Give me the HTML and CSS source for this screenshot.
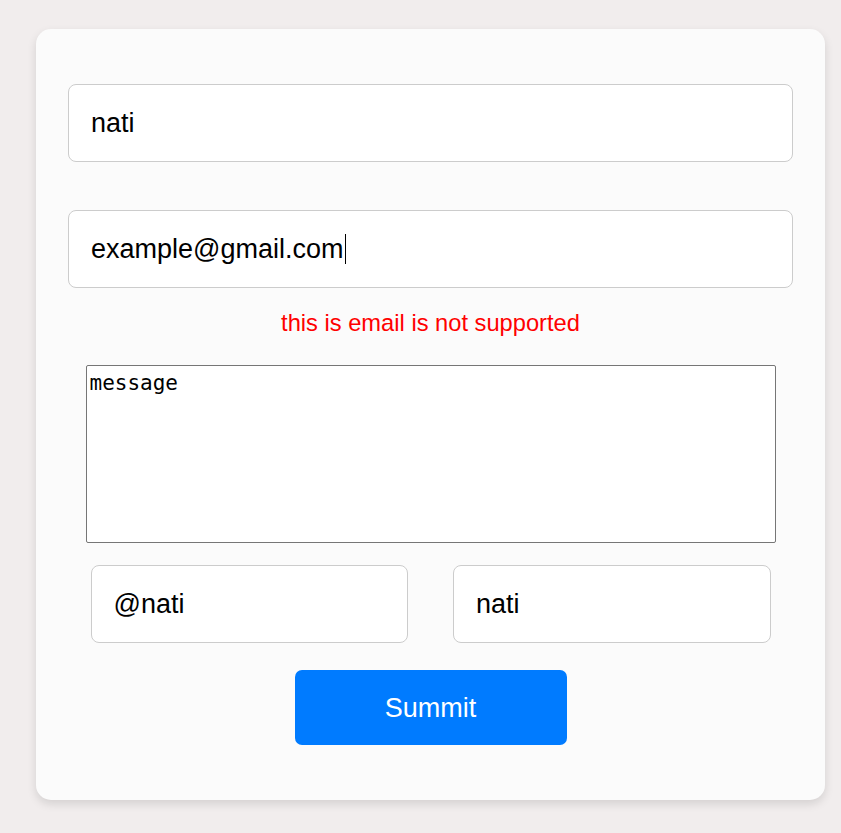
FILE: index.html
```html
<!DOCTYPE html>
<html lang="en">
<head>
<meta charset="utf-8">
<title>Form</title>
<link rel="stylesheet" href="styles.css">
</head>
<body>
<div class="card">
  <form class="form">
    <div class="field field-full">nati</div>
    <div class="field field-full field-email">example@gmail.com<span class="caret"></span></div>
    <p class="error">this is email is not supported</p>
    <textarea class="message">message</textarea>
    <div class="row">
      <div class="field field-half">@nati</div>
      <div class="field field-half">nati</div>
    </div>
    <button type="button" class="submit">Summit</button>
  </form>
</div>
</body>
</html>
```
FILE: styles.css
```css
html, body {
  margin: 0;
  padding: 0;
}
body {
  background: #f1eded;
  font-family: "Liberation Sans", Arial, sans-serif;
  padding: 29px 16px 33px 36px;
}
.card {
  width: 789px;
  box-sizing: border-box;
  background: #fbfbfb;
  border-radius: 15px;
  box-shadow: 0 4px 10px rgba(0, 0, 0, 0.12);
  padding: 55px 32px 55px 32px;
}
.form {
  display: flex;
  flex-direction: column;
  align-items: center;
  margin: 0;
}
.field {
  box-sizing: border-box;
  height: 78px;
  background: #fff;
  border: 1px solid #cccccc;
  border-radius: 8px;
  display: flex;
  align-items: center;
  padding: 0 22px;
  font-size: 27px;
  color: #000;
}
.field-full {
  width: 100%;
}
.field-email {
  margin-top: 48px;
}
.caret {
  display: inline-block;
  width: 1px;
  height: 30px;
  background: #000;
  margin-left: 1px;
}
.error {
  margin: 21px 0 0 0;
  color: #ff0000;
  font-size: 23.7px;
  line-height: 28px;
  text-align: center;
}
.message {
  box-sizing: border-box;
  margin-top: 28px;
  width: 690px;
  height: 178px;
  border: 1px solid #767676;
  border-radius: 2px;
  background: #fff;
  padding: 5px 3px 2px 3px;
  font-family: "DejaVu Sans Mono", monospace;
  font-size: 21px;
  color: #000;
  resize: none;
}
.row {
  margin-top: 22px;
  width: 680px;
  display: flex;
  gap: 45px;
}
.field-half {
  flex: 1;
}
.submit {
  margin-top: 27px;
  width: 272px;
  height: 75px;
  border: none;
  border-radius: 7px;
  background: #007bff;
  color: #fff;
  padding-top: 2px;
  font-family: "Liberation Sans", Arial, sans-serif;
  font-size: 27px;
}
```
